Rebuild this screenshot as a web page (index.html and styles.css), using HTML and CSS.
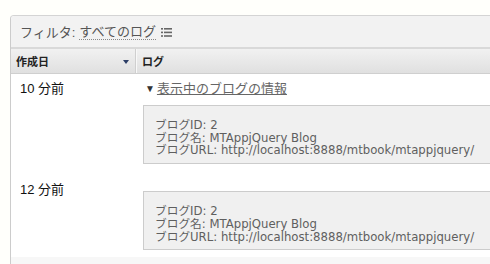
FILE: index.html
```html
<!DOCTYPE html>
<html lang="ja">
<head>
<meta charset="utf-8">
<link rel="stylesheet" href="styles.css">
</head>
<body>
<div class="panel">
  <div class="filter">
    <span class="label">フィルタ:</span>
    <span class="current">すべてのログ</span>
    <svg class="list-icon" width="11" height="9" viewBox="0 0 11 9">
      <rect x="0" y="0" width="2" height="1.6" fill="#666"/>
      <rect x="3" y="0" width="8" height="1.6" fill="#666"/>
      <rect x="0" y="3.6" width="2" height="1.6" fill="#666"/>
      <rect x="3" y="3.6" width="8" height="1.6" fill="#666"/>
      <rect x="0" y="7.2" width="2" height="1.6" fill="#666"/>
      <rect x="3" y="7.2" width="8" height="1.6" fill="#666"/>
    </svg>
  </div>
  <div class="thead">
    <div class="th th-date">作成日<span class="sort"></span></div>
    <div class="th th-log">ログ</div>
  </div>
  <div class="row">
    <div class="td-date">10 分前</div>
    <div class="td-log">
      <div class="toggle"><span class="tri">▼</span><a class="toggle-link">表示中のブログの情報</a></div>
      <div class="box">ブログID: 2<br>ブログ名: MTAppjQuery Blog<br>ブログURL: http://localhost:8888/mtbook/mtappjquery/</div>
    </div>
  </div>
  <div class="row row2">
    <div class="td-date">12 分前</div>
    <div class="td-log">
      <div class="box">ブログID: 2<br>ブログ名: MTAppjQuery Blog<br>ブログURL: http://localhost:8888/mtbook/mtappjquery/</div>
    </div>
  </div>
  <div class="row-next"></div>
</div>
</body>
</html>
```
FILE: styles.css
```css
html, body {
  margin: 0;
  padding: 0;
  background: #fffffb;
  overflow: hidden;
  width: 490px;
  height: 264px;
}
body {
  font-family: "Liberation Sans", "Noto Sans CJK JP", sans-serif;
  color: #222;
}
.panel {
  margin: 15px 0 0 10px;
  width: 520px;
  border-left: 1px solid #cccccc;
  border-top: 1px solid #d4d4d4;
  border-top-left-radius: 4px;
  background: #fff;
}
.filter {
  height: 31px;
  background: #f2f2f2;
  border-top-left-radius: 4px;
  display: flex;
  align-items: center;
  padding-left: 9px;
  font-size: 13px;
  color: #555;
  border-bottom: 2px solid #d9d9d9;
}
.filter .label { margin-right: 4px; }
.filter .current {
  border-bottom: 1px dotted #888;
  line-height: 15px;
  margin-right: 5px;
}
.list-icon { margin-top: 2px; }
.thead {
  display: flex;
  height: 24px;
  background: linear-gradient(#f1f1f1, #e0e0e0);
  border-bottom: 1px solid #cfcfcf;
}
.th {
  display: flex;
  align-items: center;
  font-size: 11px;
  font-weight: bold;
  color: #222;
}
.th-date {
  flex: none;
  width: 118px;
  padding-left: 5px;
  padding-right: 1px;
  border-right: 1px solid #cfcfcf;
  justify-content: space-between;
}
.sort {
  width: 0;
  height: 0;
  border-left: 3px solid transparent;
  border-right: 3px solid transparent;
  border-top: 4px solid #2c3e66;
  margin-right: 5px;
  margin-top: 2px;
}
.th-log {
  padding-left: 5px;
  border-left: 1px solid #f8f8f8;
}
.row {
  display: flex;
  font-size: 13px;
}
.td-date {
  flex: none;
  width: 116px;
  padding: 7px 0 0 9px;
  line-height: 15px;
  color: #111;
}
.td-log {
  flex: 1;
  min-width: 0;
  padding: 7px 0 9px 7px;
}
.toggle {
  line-height: 15px;
  padding-left: 2px;
  color: #666;
}
.tri {
  font-size: 10px;
  color: #333;
  margin-right: 2px;
  vertical-align: 1px;
}
.toggle-link {
  text-decoration: underline;
  color: #666;
}
.box {
  margin-top: 9px;
  background: #f0f0f0;
  border: 1px solid #cccccc;
  border-right: none;
  padding: 13px 0 6px 11px;
  font-family: "DejaVu Sans", "Noto Sans CJK JP", sans-serif;
  font-size: 11.7px;
  line-height: 12.7px;
  color: #5f5f5f;
  white-space: nowrap;
}
.row2 .td-date { padding-top: 9px; }
.row2 .td-log { padding-top: 9px; padding-bottom: 7px; }
.row-next {
  height: 20px;
  background: #f7f7f7;
}
```
